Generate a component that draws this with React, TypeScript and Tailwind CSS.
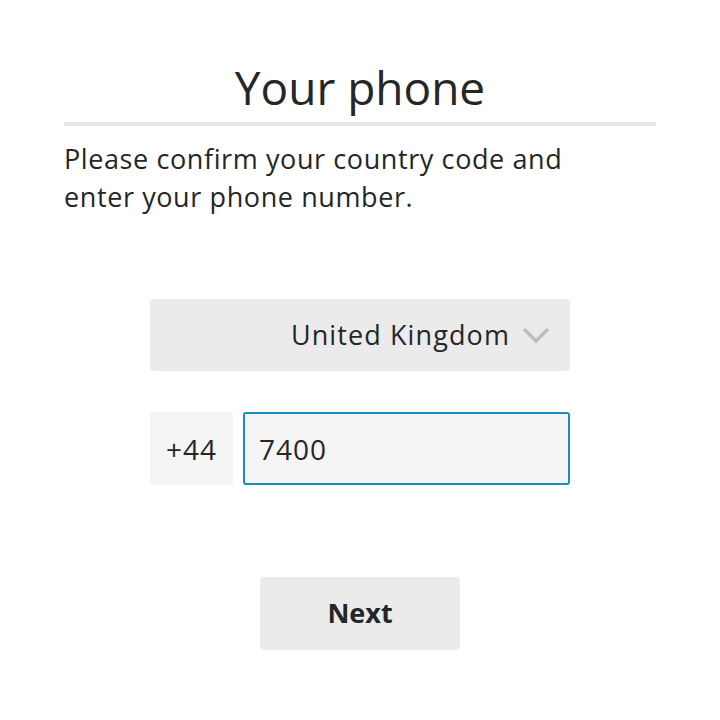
export default function App() {
  return (
    <div
      className="w-[720px] h-[720px] bg-white text-[#262626] px-16"
      style={{ fontFamily: '"Open Sans", "Noto Sans", sans-serif' }}
    >
      <h1 className="pt-[56px] text-center text-[46px] leading-[62px]">Your phone</h1>
      <div className="mt-[4px] h-[4px] bg-[#e6e6e6]" />
      <p className="mt-[14px] text-[27px] leading-[38px] tracking-[0.6px]">
        Please confirm your country code and
        <br />
        enter your phone number.
      </p>

      <div className="mx-[86px] mt-[83px] flex flex-col">
        <button className="h-[72px] rounded-[4px] bg-[#ebebeb] flex items-center justify-end pr-[20px] gap-[12px]">
          <span className="text-[27px] tracking-[1.1px]">United Kingdom</span>
          <svg width="28" height="18" viewBox="0 0 28 18" fill="none">
            <path d="M2 3 L14 15 L26 3" stroke="#bdbdbd" strokeWidth="3.5" />
          </svg>
        </button>

        <div className="mt-[41px] flex gap-[10px] h-[73px]">
          <div className="w-[83px] rounded-[3px] bg-[#f5f5f5] flex items-center justify-center text-[28px] tracking-[1px]">
            +44
          </div>
          <div className="flex-1 rounded-[3px] border-2 border-[#1a8fbd] bg-[#f5f5f5] flex items-center pl-[14px] text-[28px] tracking-[1px]">
            7400
          </div>
        </div>
      </div>

      <div className="mt-[92px] flex justify-center">
        <button className="w-[200px] h-[73px] rounded-[4px] bg-[#ebebeb] text-[27px] font-bold">Next</button>
      </div>
    </div>
  );
}
